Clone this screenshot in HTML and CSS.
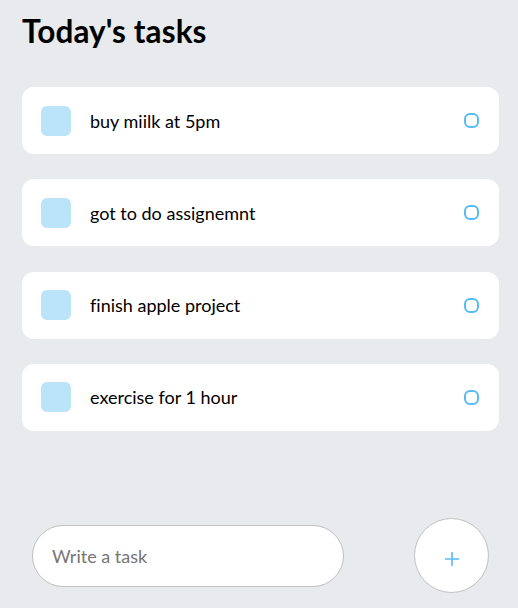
FILE: index.html
```html
<!DOCTYPE html>
<html>
<head>
<meta charset="utf-8">
<link rel="stylesheet" href="styles.css">
</head>
<body>
<div class="app">
  <div class="tasks">
    <h1 class="title">Today's tasks</h1>
    <div class="items">
      <div class="item"><div class="left"><div class="square"></div><span class="text">buy miilk at 5pm</span></div><div class="circular"></div></div>
      <div class="item"><div class="left"><div class="square"></div><span class="text">got to do assignemnt</span></div><div class="circular"></div></div>
      <div class="item"><div class="left"><div class="square"></div><span class="text">finish apple project</span></div><div class="circular"></div></div>
      <div class="item"><div class="left"><div class="square"></div><span class="text">exercise for 1 hour</span></div><div class="circular"></div></div>
    </div>
  </div>
  <div class="footer">
    <input class="input" type="text" placeholder="Write a task">
    <div class="add">
      <svg class="plus" width="14" height="14" viewBox="0 0 14 14"><path d="M7 0V14M0 7H14" stroke="#55BCF6" stroke-width="1.6" fill="none"/></svg>
    </div>
  </div>
</div>
</body>
</html>
```
FILE: styles.css
```css
html, body { margin: 0; padding: 0; }
body {
  background: #E8EAED;
  font-family: "Lato", "Segoe UI", sans-serif;
  color: #000;
  font-variant-ligatures: none;
}
.app {
  height: 608px;
  display: flex;
  flex-direction: column;
  box-sizing: border-box;
}
.tasks { padding: 0 19px 0 22px; }
.title {
  margin: 0;
  padding-top: 12px;
  font-size: 31.5px;
  font-weight: 700;
  line-height: 38px;
  letter-spacing: 0.1px;
}
.items {
  margin-top: 37px;
  display: flex;
  flex-direction: column;
  gap: 25.3px;
}
.item {
  background: #fff;
  border-radius: 12px;
  height: 67px;
  padding: 0 20px 0 19px;
  display: flex;
  align-items: center;
  justify-content: space-between;
}
.left { display: flex; align-items: center; }
.square {
  width: 30px; height: 30px;
  background: #55BCF6;
  opacity: 0.4;
  border-radius: 6px;
  margin-right: 19px;
}
.text { font-size: 18px; }
.circular {
  width: 15px; height: 15px;
  box-sizing: border-box;
  border: 2.5px solid #55BCF6;
  border-radius: 6px;
}
.footer {
  margin-top: auto;
  display: flex;
  align-items: center;
  justify-content: space-between;
  padding: 0 29px 15px 32px;
}
.input {
  width: 312px;
  height: 62px;
  box-sizing: border-box;
  border: 1px solid #C0C0C0;
  border-radius: 31px;
  background: #fff;
  padding: 0 19px;
  font-family: "Lato", sans-serif;
  font-size: 18px;
  outline: none;
}
.input::placeholder { color: #757575; }
.add {
  width: 75px; height: 75px;
  box-sizing: border-box;
  border: 1px solid #C0C0C0;
  border-radius: 50%;
  background: #fff;
  display: flex;
  align-items: center;
  justify-content: center;
}
.plus { display: block; margin-top: 6px; }
```
